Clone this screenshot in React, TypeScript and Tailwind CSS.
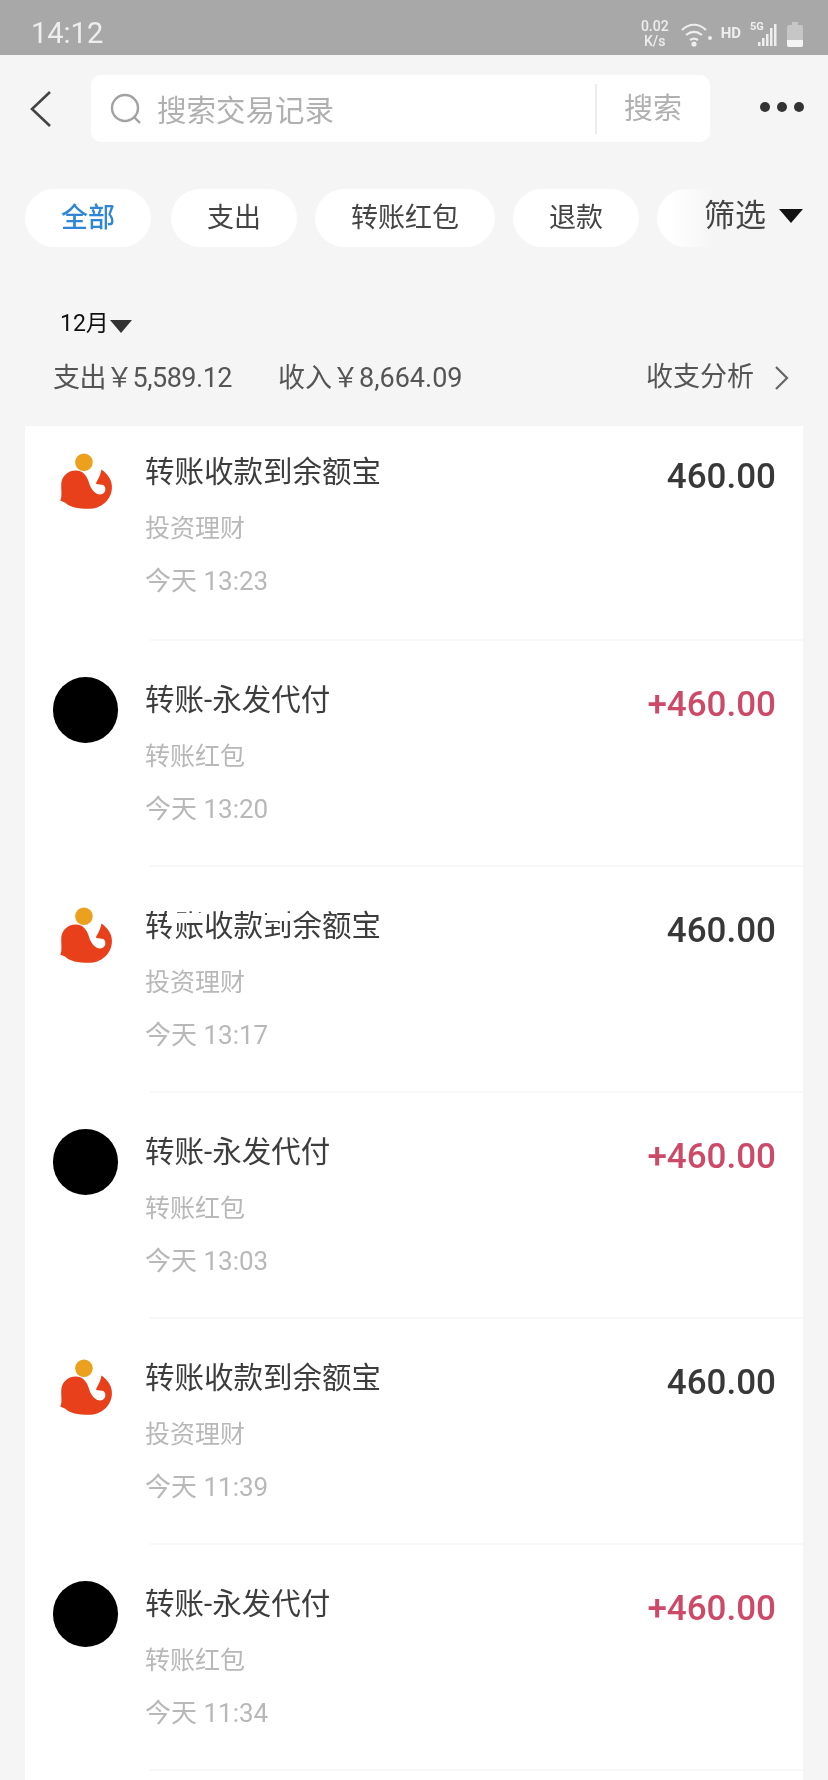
import React from "react";

const font = { fontFamily: "Roboto, 'Noto Sans CJK SC', sans-serif" };

const rows = [
  { kind: "yeb", time: "今天 13:23", glitch: false },
  { kind: "in", time: "今天 13:20", glitch: false },
  { kind: "yeb", time: "今天 13:17", glitch: true },
  { kind: "in", time: "今天 13:03", glitch: false },
  { kind: "yeb", time: "今天 11:39", glitch: false },
  { kind: "in", time: "今天 11:34", glitch: false },
];

const Whale = () => (
  <svg width="58" height="62" viewBox="0 0 56 60" className="ml-[4px]">
    <circle cx="26" cy="10" r="8.5" fill="#eba01e" />
    <path
      d="M3 47C5 44 4 38 4 32C4 24 10 18 18 18C26 18 29 24 31 30C33 37 38 42 43 41C47 40 48 35 45 32L38 31C37 29 41 27 43 17C50 22 54 29 53 36C52 47 42 55 31 55C20 55 12 53 8 49Z"
      fill="#e8401a"
    />
  </svg>
);

const Row = ({ kind, time, glitch, first }: { kind: string; time: string; glitch: boolean; first: boolean }) => {
  const isIn = kind === "in";
  return (
    <div className={`flex pl-[28px] pr-[27px] ${first ? "h-[215px] pt-[26px]" : "h-[226px] pt-[39px]"}`}>
      <div className="w-[92px] shrink-0">
        {isIn ? <div className="-mt-[3px] h-[66px] w-[65px] rounded-full bg-black" /> : <Whale />}
      </div>
      <div className="relative flex-1">
        <div className="text-[29.5px] leading-[40px] text-[#3d3d3d]">
          {isIn ? "转账-永发代付" : "转账收款到余额宝"}
        </div>
        <div className="mt-[19px] text-[25px] leading-[36px] text-[#b8b8b8]">{isIn ? "转账红包" : "投资理财"}</div>
        <div className="mt-[16px] text-[26px] leading-[36px] text-[#b8b8b8]">{time}</div>
        {glitch && (
          <>
            <div className="absolute left-0 top-[-2px] h-[7px] w-[28px] bg-white" />
            <div className="absolute left-[22px] top-[7px] h-[10px] w-[40px] bg-white" />
            <div className="absolute left-[122px] top-[7px] h-[8px] w-[26px] bg-white" />
          </>
        )}
      </div>
      <div className={`pt-[3px] text-[35px] leading-[44px] font-medium ${isIn ? "text-[#cc4a68]" : "text-[#383838]"}`}>
        {isIn ? "+460.00" : "460.00"}
      </div>
    </div>
  );
};

const Chip = ({ label, active }: { label: string; active?: boolean }) => (
  <div
    className={`flex h-[58px] items-center rounded-full bg-white px-[36px] text-[27px] ${
      active ? "mr-[2px] font-medium text-[#2f86d6]" : "text-[#444444]"
    }`}
  >
    {label}
  </div>
);

export default function App() {
  return (
    <div className="h-[1780px] w-[828px] overflow-hidden bg-[#f5f5f5] blur-[0.7px]" style={font}>
      {/* status bar */}
      <div className="flex h-[55px] items-center justify-between bg-[#a8a8a8] pl-[31px] pr-[24px] pt-[12px] text-[#eeeeee]">
        <div className="text-[29px]">14:12</div>
        <div className="flex items-center gap-[7px]">
          <div className="text-center text-[14px] leading-[15px] font-medium">
            0.02
            <br />
            K/s
          </div>
          <svg width="34" height="26" viewBox="0 0 34 26" fill="none" stroke="#eeeeee" strokeWidth="2.2" className="ml-[4px]">
            <path d="M2 9c7-7 17-7 24 0M6 14c5-4 11-4 16 0M10 19c3-2 5-2 8 0" />
            <circle cx="14" cy="23" r="1.5" fill="#eeeeee" />
            <circle cx="30" cy="17" r="2" fill="#eeeeee" stroke="none" />
          </svg>
          <div className="text-[15px] font-bold">HD</div>
          <svg width="28" height="28" viewBox="0 0 28 28" fill="#eeeeee" className="ml-[2px]">
            <text x="0" y="10" fontSize="11" fontWeight="700">5G</text>
            <rect x="8" y="22" width="2.5" height="4" />
            <rect x="12" y="18" width="2.5" height="8" />
            <rect x="16" y="14" width="2.5" height="12" />
            <rect x="20" y="8" width="2.5" height="18" />
            <rect x="24" y="4" width="2.5" height="22" />
          </svg>
          <svg width="18" height="28" viewBox="0 0 18 28" className="ml-[1px]">
            <path d="M6 2h6v3h3a2 2 0 0 1 2 2v18a2 2 0 0 1-2 2H3a2 2 0 0 1-2-2V7a2 2 0 0 1 2-2h3z" fill="#c6c6c6" />
            <path d="M1 20h16v5a2 2 0 0 1-2 2H3a2 2 0 0 1-2-2z" fill="#f4f4f4" />
          </svg>
        </div>
      </div>

      {/* search */}
      <div className="mt-[20px] flex h-[67px] items-center pl-[28px] pr-[24px]">
        <svg width="24" height="38" viewBox="0 0 24 38" fill="none" stroke="#444444" strokeWidth="2.6">
          <path d="M22 2L4 19l18 17" />
        </svg>
        <div className="ml-[39px] flex h-[67px] w-[619px] items-center rounded-[10px] bg-white pl-[18px]">
          <svg width="34" height="34" viewBox="0 0 34 34" fill="none" stroke="#a2a2a2" strokeWidth="2.4">
            <circle cx="16" cy="16" r="13" />
            <path d="M25 25l6 6" />
          </svg>
          <div className="ml-[14px] flex-1 pt-[6px] text-[29.5px] text-[#b0b0b0]">搜索交易记录</div>
          <div className="h-[50px] w-[2px] bg-[#ececec]" />
          <div className="w-[113px] pl-[27px] pt-[2px] text-[29px] whitespace-nowrap text-[#b0b0b0]">搜索</div>
        </div>
        <div className="-mt-[4px] ml-[50px] flex gap-[7px]">
          <div className="h-[10px] w-[10px] rounded-full bg-[#333333]" />
          <div className="h-[10px] w-[10px] rounded-full bg-[#333333]" />
          <div className="h-[10px] w-[10px] rounded-full bg-[#333333]" />
        </div>
      </div>

      {/* chips */}
      <div className="relative mt-[47px] flex h-[58px] items-center gap-[18px] pl-[25px]">
        <Chip label="全部" active />
        <Chip label="支出" />
        <Chip label="转账红包" />
        <Chip label="退款" />
        <div className="h-[58px] w-[70px] rounded-l-full bg-white" />
        <div className="absolute right-0 top-0 flex h-[58px] w-[160px] items-center bg-gradient-to-r from-[#f5f5f500] via-[#f5f5f5] via-30% to-[#f5f5f5] pb-[4px] pl-[36px] text-[31px] text-[#444444]">
          筛选
          <div className="ml-[13px] h-0 w-0 border-x-[12px] border-t-[14px] border-x-transparent border-t-[#111111]" />
        </div>
      </div>

      {/* month */}
      <div className="mt-[61px] flex items-center pl-[60px] text-[23px] leading-[32px] text-[#111111]">
        12月
        <div className="ml-[1px] mt-[4px] h-0 w-0 border-x-[11px] border-t-[13px] border-x-transparent border-t-[#333333]" />
      </div>
      <div className="mt-[19px] flex items-center pl-[53px] pr-[38px] text-[27px] leading-[38px] text-[#555555]">
        <div className="w-[225px] whitespace-nowrap tracking-[-0.5px]">支出￥5,589.12</div>
        <div className="whitespace-nowrap">收入￥8,664.09</div>
        <div className="ml-auto -mt-[3px]">收支分析</div>
        <svg width="16" height="26" viewBox="0 0 16 26" fill="none" stroke="#666666" strokeWidth="2.2" className="ml-[20px]">
          <path d="M2 2l11 11L2 24" />
        </svg>
      </div>

      {/* list */}
      <div className="mx-[25px] mt-[29px] h-[1400px] w-[778px] bg-white">
        {rows.map((r, i) => (
          <div key={i} className="relative">
            <Row kind={r.kind} time={r.time} glitch={r.glitch} first={i === 0} />
            <div className="absolute bottom-0 left-[125px] right-0 h-[2px] bg-[#f8f8f8]" />
          </div>
        ))}
      </div>
    </div>
  );
}
